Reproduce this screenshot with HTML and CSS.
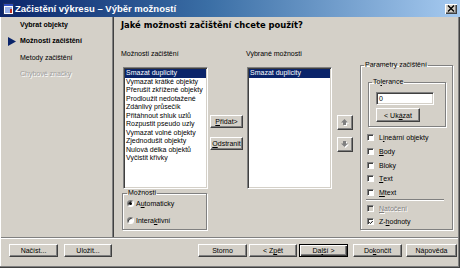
FILE: index.html
```html
<!DOCTYPE html>
<html lang="cs">
<head>
<meta charset="utf-8">
<title>Začistění výkresu</title>
<link rel="stylesheet" href="styles.css">
</head>
<body>
<div class="window">
  <div class="titlebar">
    <svg class="app-icon" width="11" height="12" viewBox="0 0 11 12">
      <rect x="0.5" y="0.5" width="10" height="11" fill="#fff" stroke="#203060"/>
      <rect x="1" y="1" width="9" height="2" fill="#3050c0"/>
      <path d="M2 5h7M2 7h5M2 9h6" stroke="#3060d0" stroke-width="1"/>
      <rect x="7" y="6" width="2" height="4" fill="#c03020"/>
    </svg>
    <span class="title">Začistění výkresu – Výběr možností</span>
    <span class="close">
      <svg width="8" height="7" viewBox="0 0 8 7"><path d="M1 0.5l6 6M7 0.5l-6 6" stroke="#000" stroke-width="1.4"/></svg>
    </span>
  </div>
  <div class="main">
    <nav class="sidebar">
      <div class="step done">Vybrat objekty</div>
      <div class="step current"><svg class="arrow" width="8" height="9" viewBox="0 0 8 9"><path d="M0 0L8 4.5L0 9Z" fill="#0a246a"/></svg>Možnosti začištění</div>
      <div class="step next">Metody začištění</div>
      <div class="step disabled">Chybové značky</div>
    </nav>
    <section class="content">
      <h1 class="heading">Jaké možnosti začištění chcete použít?</h1>
      <div class="cols">
        <div class="col col-a">
          <div class="label">Možnosti začištění</div>
          <ul class="listbox">
            <li class="sel">Smazat duplicity</li>
            <li>Vymazat krátké objekty</li>
            <li>Přerušit zkřížené objekty</li>
            <li>Prodloužit nedotažené</li>
            <li>Zdánlivý průsečík</li>
            <li>Přitáhnout shluk uzlů</li>
            <li>Rozpustit pseudo uzly</li>
            <li>Vymazat volné objekty</li>
            <li>Zjednodušit objekty</li>
            <li>Nulová délka objektů</li>
            <li>Vyčistit křivky</li>
          </ul>
          <fieldset class="group opts">
            <legend>Možnosti</legend>
            <div class="radio-row first"><span class="radio on"></span>A<u>u</u>tomaticky</div>
            <div class="radio-row"><span class="radio"></span>Intera<u>k</u>tivní</div>
          </fieldset>
        </div>
        <div class="col col-b">
          <div class="btn add"><u>P</u>řidat&gt;</div>
          <div class="btn remove"><u>O</u>dstranit</div>
        </div>
        <div class="col col-c">
          <div class="label">Vybrané možnosti</div>
          <ul class="listbox">
            <li class="sel">Smazat duplicity</li>
          </ul>
        </div>
        <div class="col col-d">
          <div class="btn arrowbtn up">
            <svg width="8" height="7" viewBox="0 0 8 7"><path d="M4.5 1L8 4.5H6V7H3V4.5H1Z" fill="#fff"/><path d="M3.5 0L7 3.5H5V6H2V3.5H0Z" fill="#808080"/></svg>
          </div>
          <div class="btn arrowbtn down">
            <svg width="8" height="7" viewBox="0 0 8 7"><path d="M3 1H6V3.5H8L4.5 7L1 3.5H3Z" fill="#fff"/><path d="M2 0H5V2.5H7L3.5 6L0 2.5H2Z" fill="#808080"/></svg>
          </div>
        </div>
        <div class="col col-e">
          <fieldset class="group params">
            <legend>Parametry začištění</legend>
            <fieldset class="group tolerance">
              <legend>To<u>l</u>erance</legend>
              <div class="textbox">0</div>
              <div class="btn show">&lt; Uk<u>á</u>zat</div>
            </fieldset>
            <div class="checks">
              <div class="check-row"><span class="checkbox"></span>L<u>i</u>neární objekty</div>
              <div class="check-row"><span class="checkbox"></span><u>B</u>ody</div>
              <div class="check-row"><span class="checkbox"></span>Bloky</div>
              <div class="check-row"><span class="checkbox"></span><u>T</u>ext</div>
              <div class="check-row"><span class="checkbox"></span><u>M</u>text</div>
              <div class="sep"></div>
              <div class="check-row disabled"><span class="checkbox off"></span><u>N</u>atočení</div>
              <div class="check-row"><span class="checkbox"><svg width="5" height="5" viewBox="0 0 5 5"><path d="M0.3 2.2L1.8 3.8L4.7 0.6" fill="none" stroke="#000" stroke-width="1.2"/></svg></span>Z-<u>h</u>odnoty</div>
            </div>
          </fieldset>
        </div>
      </div>
    </section>
  </div>
  <div class="footer">
    <div class="btn fb load">Načíst...</div>
    <div class="btn fb save">Uložit...</div>
    <div class="btn fb cancel">Storno</div>
    <div class="btn fb back">&lt; Z<u>p</u>ět</div>
    <div class="btn fb nextb default">Da<u>l</u>ší &gt;</div>
    <div class="btn fb finish">Do<u>k</u>ončit</div>
    <div class="btn fb help">Nápověda</div>
  </div>
</div>
</body>
</html>
```
FILE: styles.css
```css
* { box-sizing: border-box; }
html, body { margin: 0; padding: 0; }
body {
  width: 460px;
  height: 268px;
  overflow: hidden;
  background: #d4d0c8;
  font-family: "Liberation Sans", Arial, sans-serif;
  font-size: 7px;
  color: #000;
}
u { text-decoration: underline; text-decoration-thickness: 0.5px; text-underline-offset: 1px; }
ul { list-style: none; margin: 0; padding: 0; }

.window {
  width: 460px;
  height: 268px;
  background: #d4d0c8;
  padding: 0 2px 2px 1px;
  box-shadow: inset -1px -1px 0 #404040, inset -2px -2px 0 #808080, inset 1px 0 0 #fff;
  display: flex;
  flex-direction: column;
}

/* title bar */
.titlebar {
  height: 17px;
  flex: none;
  margin: 0 -2px 0 -1px;
  padding: 0 3px 0 3px;
  display: flex;
  align-items: center;
  background: linear-gradient(to right, #0a246a 0%, #3a6ea5 45%, #a6caf0 100%);
  color: #fff;
  font-weight: bold;
  font-size: 9.5px;
}
.app-icon { flex: none; margin-right: 1px; }
.title { flex: 1; white-space: nowrap; }
.close {
  width: 12px;
  height: 10px;
  display: flex;
  align-items: center;
  justify-content: center;
  background: #d4d0c8;
  box-shadow: inset 1px 1px 0 #fff, inset -1px -1px 0 #404040, inset -2px -2px 0 #808080;
}

/* main area */
.main {
  height: 222px;
  flex: none;
  display: flex;
  border-bottom: 1px solid #fff;
  box-shadow: inset 0 -1px 0 #808080;
}
.sidebar {
  width: 112px;
  flex: none;
  border-right: 1px solid #808080;
  margin-bottom: 1px;
}
.step {
  line-height: 16.4px;
  height: 16.4px;
  padding-left: 19px;
  font-size: 7px;
  white-space: nowrap;
  display: flex;
  align-items: center;
}
.step.done, .step.current { font-weight: bold; }
.step.current { padding-left: 0; }
.step .arrow { margin: 0 4px 0 7px; flex: none; }
.step.disabled { color: #a0a0a0; text-shadow: 1px 1px 0 #fff; }

.content {
  flex: 1;
  border-left: 1px solid #404040;
  margin-bottom: 1px;
}
.heading {
  margin: 0;
  height: 16px;
  line-height: 16px;
  padding-left: 7px;
  font-family: "DejaVu Sans", sans-serif;
  font-weight: bold;
  font-size: 8.4px;
  white-space: nowrap;
}
.cols {
  display: flex;
  padding-left: 8px;
}
.col { flex: none; display: flex; flex-direction: column; }
.col-a { width: 86px; }
.col-b { width: 33px; margin-left: 2px; }
.col-c { width: 85px; margin-left: 4px; }
.col-d { width: 17px; margin-left: 5px; }
.col-e { width: 93px; margin-left: 6px; }

.label {
  margin-top: 17px;
  height: 8px;
  line-height: 8px;
  margin-left: -1px;
  white-space: nowrap;
}
.listbox {
  margin-top: 9px;
  height: 122px;
  width: 85px;
  background: #fff;
  border: 1px solid;
  border-color: #808080 #fff #fff #808080;
  box-shadow: inset 1px 1px 0 #404040, inset -1px -1px 0 #d4d0c8;
  padding: 1px 1px 0 1px;
}
.col-a .listbox { margin-left: 1px; }
.listbox li {
  height: 8.5px;
  line-height: 8.5px;
  padding-left: 1px;
  white-space: nowrap;
  overflow: hidden;
}
.listbox li.sel { background: #0a246a; color: #fff; }

/* group boxes */
.group {
  margin: 0;
  padding: 0;
  min-inline-size: 0;
  border: 1px solid #808080;
  box-shadow: inset 1px 1px 0 #fff, 1px 1px 0 #fff;
}
.group legend {
  padding: 0 1px;
  line-height: 8px;
  height: 8px;
  white-space: nowrap;
}
.opts {
  width: 85px;
  height: 41px;
  margin-top: 0;
}
.opts legend { margin-left: 4px; }
.radio-row {
  display: flex;
  align-items: center;
  height: 10px;
  padding-left: 4px;
  margin-top: 7px;
  white-space: nowrap;
}
.radio-row.first { margin-top: 1px; }
.radio {
  width: 7px;
  height: 7px;
  border-radius: 50%;
  background: #fff;
  border: 1px solid;
  border-color: #808080 #fff #fff #808080;
  box-shadow: inset 1px 1px 0 #404040;
  margin-right: 2px;
  display: flex;
  align-items: center;
  justify-content: center;
  flex: none;
}
.radio.on::after {
  content: "";
  width: 3px;
  height: 3px;
  border-radius: 50%;
  background: #000;
}

/* buttons */
.btn {
  display: flex;
  align-items: center;
  justify-content: center;
  background: #d4d0c8;
  border: 1px solid;
  border-color: #fff #404040 #404040 #fff;
  box-shadow: inset -1px -1px 0 #808080;
  white-space: nowrap;
  font-size: 7px;
}
.btn.default {
  border: 1px solid #000;
  box-shadow: inset 1px 1px 0 #fff, inset -1px -1px 0 #404040, inset -2px -2px 0 #808080;
}
.add { margin-top: 82px; height: 13px; }
.remove { margin-top: 9px; height: 13px; }
.arrowbtn { width: 16px; height: 15px; }
.up { margin-top: 82px; }
.down { margin-top: 7px; }

/* parameters */
.params {
  margin-top: 28px;
  width: 93px;
  height: 169px;
}
.params > legend { margin-left: 3px; }
.tolerance {
  margin: 9px 0 0 7px;
  width: 78px;
  height: 49px;
}
.tolerance legend { margin-left: 3px; }
.textbox {
  margin: 6px 0 0 7px;
  width: 58px;
  height: 13px;
  background: #fff;
  border: 1px solid;
  border-color: #808080 #fff #fff #808080;
  box-shadow: inset 1px 1px 0 #404040, inset -1px -1px 0 #d4d0c8;
  padding-left: 2px;
  line-height: 11px;
}
.show {
  margin: 3px 0 0 7px;
  width: 44px;
  height: 14px;
}
.checks { margin-top: 4px; }
.check-row {
  height: 13.7px;
  display: flex;
  align-items: center;
  padding-left: 6px;
  white-space: nowrap;
}
.checkbox {
  width: 7px;
  height: 7px;
  flex: none;
  margin-right: 5px;
  background: #fff;
  border: 1px solid;
  border-color: #808080 #fff #fff #808080;
  box-shadow: inset 1px 1px 0 #404040;
  display: flex;
  align-items: center;
  justify-content: center;
  padding: 1px 0 0 1px;
}
.checkbox.off { background: #d4d0c8; }
.check-row.disabled { color: #808080; text-shadow: 1px 1px 0 #fff; }
.sep {
  margin-left: 5px;
  width: 78px;
  height: 2px;
  border-top: 1px solid #808080;
  border-bottom: 1px solid #fff;
}

/* footer */
.footer {
  flex: 1;
  display: flex;
  align-items: flex-start;
  padding: 5px 0 0 8px;
}
.fb { height: 13px; width: 48px; }
.load { width: 49px; }
.save { margin-left: 6px; }
.cancel { margin-left: 86px; width: 49px; }
.back { margin-left: 2px; }
.nextb { margin-left: 2px; width: 49px; }
.finish { margin-left: 5px; width: 49px; }
.help { margin-left: 4px; width: 51px; }
```
